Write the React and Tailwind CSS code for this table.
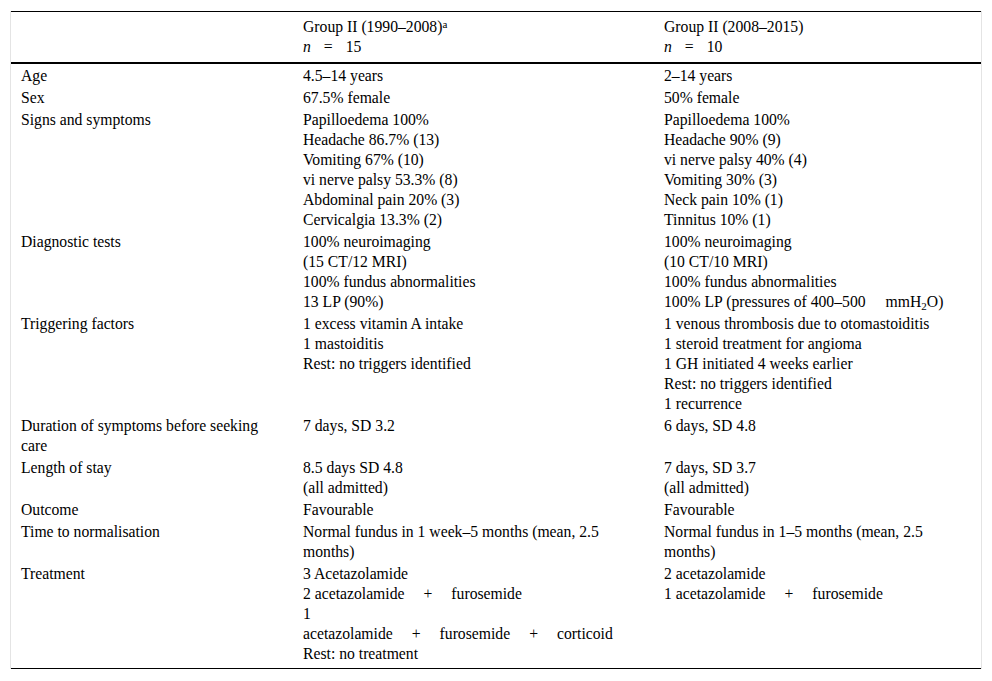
import React from "react";

// Spacers for the wide gaps around "=", "+" and before units.
const Eq = () => <span className="inline-block w-[13px]" />;
const Wide = () => <span className="inline-block w-[19px]" />;

const Plus = ({ parts }) => (
  <>
    {parts.map((p, i) => (
      <React.Fragment key={i}>
        {i > 0 && (<><Wide />+<Wide /></>)}
        {p}
      </React.Fragment>
    ))}
  </>
);

const ROWS = [
  { label: ["Age"], a: ["4.5–14 years"], b: ["2–14 years"] },
  { label: ["Sex"], a: ["67.5% female"], b: ["50% female"] },
  {
    label: ["Signs and symptoms"],
    a: ["Papilloedema 100%", "Headache 86.7% (13)", "Vomiting 67% (10)", "vi nerve palsy 53.3% (8)", "Abdominal pain 20% (3)", "Cervicalgia 13.3% (2)"],
    b: ["Papilloedema 100%", "Headache 90% (9)", "vi nerve palsy 40% (4)", "Vomiting 30% (3)", "Neck pain 10% (1)", "Tinnitus 10% (1)"],
  },
  {
    label: ["Diagnostic tests"],
    a: ["100% neuroimaging", "(15 CT/12 MRI)", "100% fundus abnormalities", "13 LP (90%)"],
    b: [
      "100% neuroimaging",
      "(10 CT/10 MRI)",
      "100% fundus abnormalities",
      <>100% LP (pressures of 400–500<span className="inline-block w-[20px]" />mmH<sub className="text-[11px] leading-none">2</sub>O)</>,
    ],
  },
  {
    label: ["Triggering factors"],
    a: ["1 excess vitamin A intake", "1 mastoiditis", "Rest: no triggers identified"],
    b: ["1 venous thrombosis due to otomastoiditis", "1 steroid treatment for angioma", "1 GH initiated 4 weeks earlier", "Rest: no triggers identified", "1 recurrence"],
  },
  { label: ["Duration of symptoms before seeking", "care"], a: ["7 days, SD 3.2"], b: ["6 days, SD 4.8"] },
  { label: ["Length of stay"], a: ["8.5 days SD 4.8", "(all admitted)"], b: ["7 days, SD 3.7", "(all admitted)"] },
  { label: ["Outcome"], a: ["Favourable"], b: ["Favourable"] },
  {
    label: ["Time to normalisation"],
    a: ["Normal fundus in 1 week–5 months (mean, 2.5", "months)"],
    b: ["Normal fundus in 1–5 months (mean, 2.5", "months)"],
  },
  {
    label: ["Treatment"],
    a: [
      "3 Acetazolamide",
      <Plus parts={["2 acetazolamide", "furosemide"]} />,
      "1",
      <Plus parts={["acetazolamide", "furosemide", "corticoid"]} />,
      "Rest: no treatment",
    ],
    b: ["2 acetazolamide", <Plus parts={["1 acetazolamide", "furosemide"]} />],
  },
];

const Lines = ({ items }) => (
  <>
    {items.map((t, i) => (
      <div key={i} className="whitespace-nowrap">{t}</div>
    ))}
  </>
);

export default function App() {
  return (
    <div className="min-h-[681px] bg-white pt-[11px] pl-[10px] text-black font-[family-name:Liberation_Serif,serif] text-[15.7px] leading-[20px]">
      <div className="w-[972px] border-x border-[#e4e4e4]">
        <table className="w-[970px] table-fixed border-collapse">
          <colgroup>
            <col className="w-[282px]" />
            <col className="w-[361px]" />
            <col className="w-[327px]" />
          </colgroup>
          <thead>
            <tr className="border-t border-black border-b-2">
              <th className="pl-[10px] pt-[5px] pb-[5px]" />
              <th className="pl-[10px] pt-[5px] pb-[5px] text-left font-normal align-top">
                <div>
                  Group II (1990–2008)<sup className="text-[11px] leading-none relative -top-[4px]">a</sup>
                </div>
                <div>
                  <i>n</i><Eq />=<Eq />15
                </div>
              </th>
              <th className="pl-[10px] pt-[5px] pb-[5px] text-left font-normal align-top">
                <div>Group II (2008–2015)</div>
                <div>
                  <i>n</i><Eq />=<Eq />10
                </div>
              </th>
            </tr>
          </thead>
          <tbody>
            {ROWS.map((r, i) => {
              const last = i === ROWS.length - 1;
              const pad = last ? "pl-[10px] pt-[2px] pb-[4px] align-top" : "pl-[10px] pt-[2px] pb-0 align-top";
              return (
                <tr key={i} className={last ? "border-b border-black" : ""}>
                  <td className={pad}><Lines items={r.label} /></td>
                  <td className={pad}><Lines items={r.a} /></td>
                  <td className={pad}><Lines items={r.b} /></td>
                </tr>
              );
            })}
          </tbody>
        </table>
      </div>
    </div>
  );
}
